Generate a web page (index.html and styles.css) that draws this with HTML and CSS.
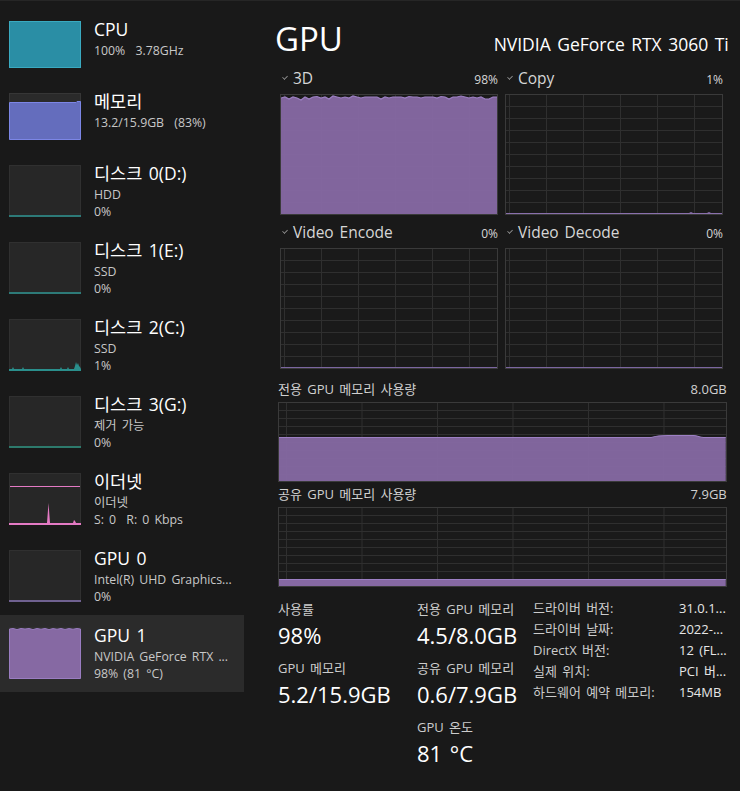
FILE: index.html
```html
<!DOCTYPE html>
<html lang="ko">
<head>
<meta charset="utf-8">
<title>GPU</title>
<link rel="stylesheet" href="styles.css">
</head>
<body>
<div class="app">
  <aside class="sidebar">
    <div class="item">
      <div class="thumb thumb-s thumb-cpu"></div>
      <div class="info"><div class="name">CPU</div><div class="sub">100%&nbsp; 3.78GHz</div></div>
    </div>
    <div class="item">
      <svg class="thumb-svg" width="72" height="47" viewBox="0 0 72 47">
        <rect x="0.5" y="0.5" width="71" height="46" fill="#2a2a2a" stroke="#363636"/>
        <path d="M0.5 9.5 H67 L68 8.5 H71.5 V46.5 H0.5 Z" fill="#646dbd" stroke="#7c86e6" stroke-width="1"/>
      </svg>
      <div class="info"><div class="name">메모리</div><div class="sub">13.2/15.9GB&nbsp; (83%)</div></div>
    </div>
    <div class="item">
      <svg class="thumb-svg" width="72" height="52" viewBox="0 0 72 52">
        <rect x="0.5" y="0.5" width="71" height="51" fill="#272727" stroke="#303030"/>
        <rect x="0" y="50" width="72" height="2" fill="#2d7a78"/>
      </svg>
      <div class="info"><div class="name">디스크 0(D:)</div><div class="sub">HDD</div><div class="sub">0%</div></div>
    </div>
    <div class="item">
      <svg class="thumb-svg" width="72" height="52" viewBox="0 0 72 52">
        <rect x="0.5" y="0.5" width="71" height="51" fill="#272727" stroke="#303030"/>
        <rect x="0" y="50" width="72" height="2" fill="#2d7a78"/>
      </svg>
      <div class="info"><div class="name">디스크 1(E:)</div><div class="sub">SSD</div><div class="sub">0%</div></div>
    </div>
    <div class="item">
      <svg class="thumb-svg" width="72" height="52" viewBox="0 0 72 52">
        <rect x="0.5" y="0.5" width="71" height="51" fill="#272727" stroke="#303030"/>
        <path d="M0 50 L3 50 L4 48 L5 50 L13 50 L14 48 L15 50 L51 50 L52 48 L53 50 L58 50 L59 48 L60 50 L65 50 L66 47 L67 43 L68 46 L69 44 L70 47 L71 48 L72 50 L72 52 L0 52 Z" fill="#2a8f8c"/>
      </svg>
      <div class="info"><div class="name">디스크 2(C:)</div><div class="sub">SSD</div><div class="sub">1%</div></div>
    </div>
    <div class="item">
      <svg class="thumb-svg" width="72" height="52" viewBox="0 0 72 52">
        <rect x="0.5" y="0.5" width="71" height="51" fill="#272727" stroke="#303030"/>
        <rect x="0" y="50" width="72" height="2" fill="#2d7a6c"/>
      </svg>
      <div class="info"><div class="name">디스크 3(G:)</div><div class="sub">제거 가능</div><div class="sub">0%</div></div>
    </div>
    <div class="item">
      <svg class="thumb-svg" width="72" height="52" viewBox="0 0 72 52">
        <rect x="0.5" y="0.5" width="71" height="51" fill="#272727" stroke="#303030"/>
        <rect x="1" y="13" width="70" height="1" fill="#e47ac4"/>
        <path d="M0 50 L38 50 L39.5 30 L41 50 L64 50 L65 47 L66 48 L67 50 L72 50 L72 52 L0 52 Z" fill="#e47ac4"/>
      </svg>
      <div class="info"><div class="name">이더넷</div><div class="sub">이더넷</div><div class="sub">S: 0&nbsp; R: 0 Kbps</div></div>
    </div>
    <div class="item">
      <svg class="thumb-svg" width="72" height="52" viewBox="0 0 72 52">
        <rect x="0.5" y="0.5" width="71" height="51" fill="#272727" stroke="#303030"/>
        <rect x="0" y="50" width="72" height="2" fill="#6f6190"/>
      </svg>
      <div class="info"><div class="name">GPU 0</div><div class="sub">Intel(R) UHD Graphics...</div><div class="sub">0%</div></div>
    </div>
    <div class="item selected">
      <svg class="thumb-svg" width="72" height="52" viewBox="0 0 72 52">
        <rect x="0.5" y="0.5" width="71" height="51" fill="#272727" stroke="#303030"/>
        <path d="M0.5 2 L4 1.5 L8 2.5 L12 1.5 L16 2 L20 1.5 L24 2.5 L28 1.5 L32 2.2 L36 1.5 L40 2.5 L44 1.6 L48 2.2 L52 1.5 L56 2.4 L60 1.6 L64 2.2 L68 1.5 L71.5 2 L71.5 51.5 L0.5 51.5 Z" fill="#8669a3" stroke="#9a7dc1" stroke-width="1"/>
      </svg>
      <div class="info"><div class="name">GPU 1</div><div class="sub">NVIDIA GeForce RTX ...</div><div class="sub">98% (81 °C)</div></div>
    </div>
  </aside>

  <main class="main">
    <header class="head">
      <h1 class="title">GPU</h1>
      <div class="model">NVIDIA GeForce RTX 3060 Ti</div>
    </header>

    <section class="small-grid">
      <div class="panel">
        <div class="plabel"><span class="chev"></span><span class="pname">3D</span><span class="pval">98%</span></div>
        <div class="chart chart-small">
          <svg class="plot" viewBox="0 0 216 119" preserveAspectRatio="none">
            <path d="M0 3 L4 2 L8 4 L12 2 L16 3 L20 5 L24 2 L28 4 L32 2 L36 1.5 L40 3 L44 2 L48 4 L52 1 L56 2 L60 3 L64 2 L68 3 L72 1 L76 2 L80 3 L84 2 L88 2 L92 2 L96 2 L100 4 L104 2 L108 3 L112 2 L116 2 L120 2 L124 3 L128 1.5 L132 2 L136 2 L140 3 L144 2 L148 2 L152 2 L156 3 L160 1.5 L164 2 L168 4 L172 2 L176 2 L180 1 L184 2 L188 3 L192 2 L196 3 L200 2 L204 4 L208 4 L212 2 L216 2 L216 119 L0 119 Z" fill="#8769a4" fill-opacity="0.95"/>
            <path d="M0 3 L4 2 L8 4 L12 2 L16 3 L20 5 L24 2 L28 4 L32 2 L36 1.5 L40 3 L44 2 L48 4 L52 1 L56 2 L60 3 L64 2 L68 3 L72 1 L76 2 L80 3 L84 2 L88 2 L92 2 L96 2 L100 4 L104 2 L108 3 L112 2 L116 2 L120 2 L124 3 L128 1.5 L132 2 L136 2 L140 3 L144 2 L148 2 L152 2 L156 3 L160 1.5 L164 2 L168 4 L172 2 L176 2 L180 1 L184 2 L188 3 L192 2 L196 3 L200 2 L204 4 L208 4 L212 2 L216 2" fill="none" stroke="#9d80c4" stroke-width="1.2"/>
          </svg>
        </div>
      </div>
      <div class="panel">
        <div class="plabel"><span class="chev"></span><span class="pname">Copy</span><span class="pval">1%</span></div>
        <div class="chart chart-small">
          <svg class="plot" viewBox="0 0 216 119" preserveAspectRatio="none">
            <path d="M0 118 L183 118 L185 117 L187 118 L201 118 L203 117 L205 118 L216 118 L216 119 L0 119 Z" fill="#8a70ad"/>
          </svg>
        </div>
      </div>
      <div class="panel">
        <div class="plabel"><span class="chev"></span><span class="pname">Video Encode</span><span class="pval">0%</span></div>
        <div class="chart chart-small">
          <svg class="plot" viewBox="0 0 216 119" preserveAspectRatio="none">
            <rect x="0" y="118" width="216" height="1" fill="#7b66a0"/>
          </svg>
        </div>
      </div>
      <div class="panel">
        <div class="plabel"><span class="chev"></span><span class="pname">Video Decode</span><span class="pval">0%</span></div>
        <div class="chart chart-small">
          <svg class="plot" viewBox="0 0 216 119" preserveAspectRatio="none">
            <rect x="0" y="118" width="216" height="1" fill="#7b66a0"/>
          </svg>
        </div>
      </div>
    </section>

    <section class="wide">
      <div class="wlabel"><span>전용 GPU 메모리 사용량</span><span>8.0GB</span></div>
      <div class="chart chart-wide">
        <svg class="plot" viewBox="0 0 444 78" preserveAspectRatio="none">
          <path d="M0 34.5 L370 34.5 C376 32.5 380 32.5 386 32.5 L412 32.5 C416 32.5 418 34.5 422 34.5 L444 34.5 L444 78 L0 78 Z" fill="#8669a3" fill-opacity="0.95"/>
          <path d="M0 34.5 L370 34.5 C376 32.5 380 32.5 386 32.5 L412 32.5 C416 32.5 418 34.5 422 34.5 L444 34.5" fill="none" stroke="#9d80c4" stroke-width="1"/>
        </svg>
      </div>
      <div class="wlabel"><span>공유 GPU 메모리 사용량</span><span>7.9GB</span></div>
      <div class="chart chart-wide">
        <svg class="plot" viewBox="0 0 444 78" preserveAspectRatio="none">
          <rect x="0" y="71.5" width="444" height="6.5" fill="#8669a3"/>
          <rect x="0" y="71" width="444" height="1" fill="#9d80c4"/>
        </svg>
      </div>
    </section>

    <section class="stats">
      <div class="scol scol1">
        <div class="slabel">사용률</div>
        <div class="svalue">98%</div>
        <div class="slabel">GPU 메모리</div>
        <div class="svalue">5.2/15.9GB</div>
      </div>
      <div class="scol scol2">
        <div class="slabel">전용 GPU 메모리</div>
        <div class="svalue">4.5/8.0GB</div>
        <div class="slabel">공유 GPU 메모리</div>
        <div class="svalue">0.6/7.9GB</div>
        <div class="slabel">GPU 온도</div>
        <div class="svalue">81 °C</div>
      </div>
      <div class="props">
        <div class="pk">드라이버 버전:</div><div class="pv">31.0.1...</div>
        <div class="pk">드라이버 날짜:</div><div class="pv">2022-...</div>
        <div class="pk">DirectX 버전:</div><div class="pv">12 (FL...</div>
        <div class="pk">실제 위치:</div><div class="pv">PCI 버...</div>
        <div class="pk">하드웨어 예약 메모리:</div><div class="pv">154MB</div>
      </div>
    </section>
  </main>
</div>
</body>
</html>
```

FILE: styles.css
```css
* { box-sizing: border-box; margin: 0; padding: 0; }

html, body {
  width: 740px;
  height: 791px;
  background: #191919;
  overflow: hidden;
}

body {
  font-family: "Open Sans", "Noto Sans CJK KR", sans-serif;
  color: #ffffff;
  word-spacing: 0.12em;
}

.app {
  display: flex;
  height: 791px;
  border-top: 1px solid #262626;
}

/* Sidebar */
.sidebar {
  width: 244px;
  flex: none;
  padding-top: 8px;
}

.item {
  display: flex;
  align-items: flex-start;
  padding: 12px 0 13px 9px;
}

.item.selected {
  background: #2b2b2b;
}

.thumb-svg, .thumb {
  flex: none;
  display: block;
}

.thumb-s {
  width: 72px;
  height: 47px;
}

.thumb-cpu {
  background: #2a8ea5;
  border: 1px solid #3aaac0;
}

.info {
  margin-left: 13px;
  margin-top: -3px;
  margin-bottom: -6px;
  white-space: nowrap;
}

.name {
  font-size: 17.5px;
  line-height: 22px;
  color: #ffffff;
}

.sub {
  font-size: 12.3px;
  line-height: 17.5px;
  color: #c8c8c8;
}

.name + .sub {
  margin-top: 1.7px;
}

/* Main */
.main {
  flex: 1;
  padding: 0 16px 0 34px;
}

.head {
  display: flex;
  justify-content: space-between;
  align-items: baseline;
  padding-top: 16px;
  height: 67px;
  margin-left: -3px;
}

.title {
  font-size: 33px;
  font-weight: 400;
  line-height: 44px;
}

.model {
  font-size: 17.5px;
  margin-right: -2px;
}

.small-grid {
  display: grid;
  grid-template-columns: 218px 218px;
  column-gap: 7px;
  row-gap: 7px;
  padding-left: 2px;
}

.plabel {
  display: flex;
  align-items: baseline;
  height: 20px;
  line-height: 20px;
  margin-bottom: 6px;
}

.chev {
  width: 6px;
  height: 4px;
  margin: 0 5px 0 2px;
  align-self: center;
  border-left: 1px solid #9a9a9a;
  border-bottom: 1px solid #9a9a9a;
  transform: translateY(-1px) rotate(-45deg) scale(0.8);
}

.pname {
  font-size: 15.5px;
  color: #d6d6d6;
  flex: 1;
}

.pval {
  font-size: 12px;
  color: #d6d6d6;
}

.chart {
  border: 1px solid #3a3a3a;
  background-color: #1a1a1a;
  background-image:
    linear-gradient(to bottom, #2f2f2f 1px, transparent 1px),
    linear-gradient(to right, #2f2f2f 1px, transparent 1px);
}

.chart-small {
  height: 121px;
  background-size: 100% 12px, 37px 100%;
  background-position: 0 11px, 3px 0;
}

.chart-wide {
  height: 80px;
  background-size: 100% 8px, 75.5px 100%;
  background-position: 0 7px, 7px 0;
}

.plot {
  display: block;
  width: 100%;
  height: 100%;
}

.wide {
  padding-top: 11px;
}

.wlabel {
  display: flex;
  justify-content: space-between;
  font-size: 13px;
  line-height: 18px;
  color: #d0d0d0;
  margin-bottom: 4px;
}

.chart-wide + .wlabel {
  margin-top: 3px;
}

/* Stats */
.stats {
  display: flex;
  padding-top: 13px;
}

.scol1 {
  width: 139px;
  flex: none;
}

.scol2 {
  width: 116px;
  flex: none;
}

.slabel {
  font-size: 13px;
  line-height: 18px;
  color: #cccccc;
}

.svalue {
  font-size: 22px;
  line-height: 28px;
  margin-top: 3px;
  margin-bottom: 10px;
  color: #ffffff;
}

.props {
  flex: 1;
  display: grid;
  grid-template-columns: 146px auto;
  grid-auto-rows: 21px;
  margin-top: -2px;
  font-size: 13px;
  line-height: 21px;
}

.pk {
  color: #cccccc;
  white-space: nowrap;
}

.pv {
  color: #e6e6e6;
  white-space: nowrap;
}
```
